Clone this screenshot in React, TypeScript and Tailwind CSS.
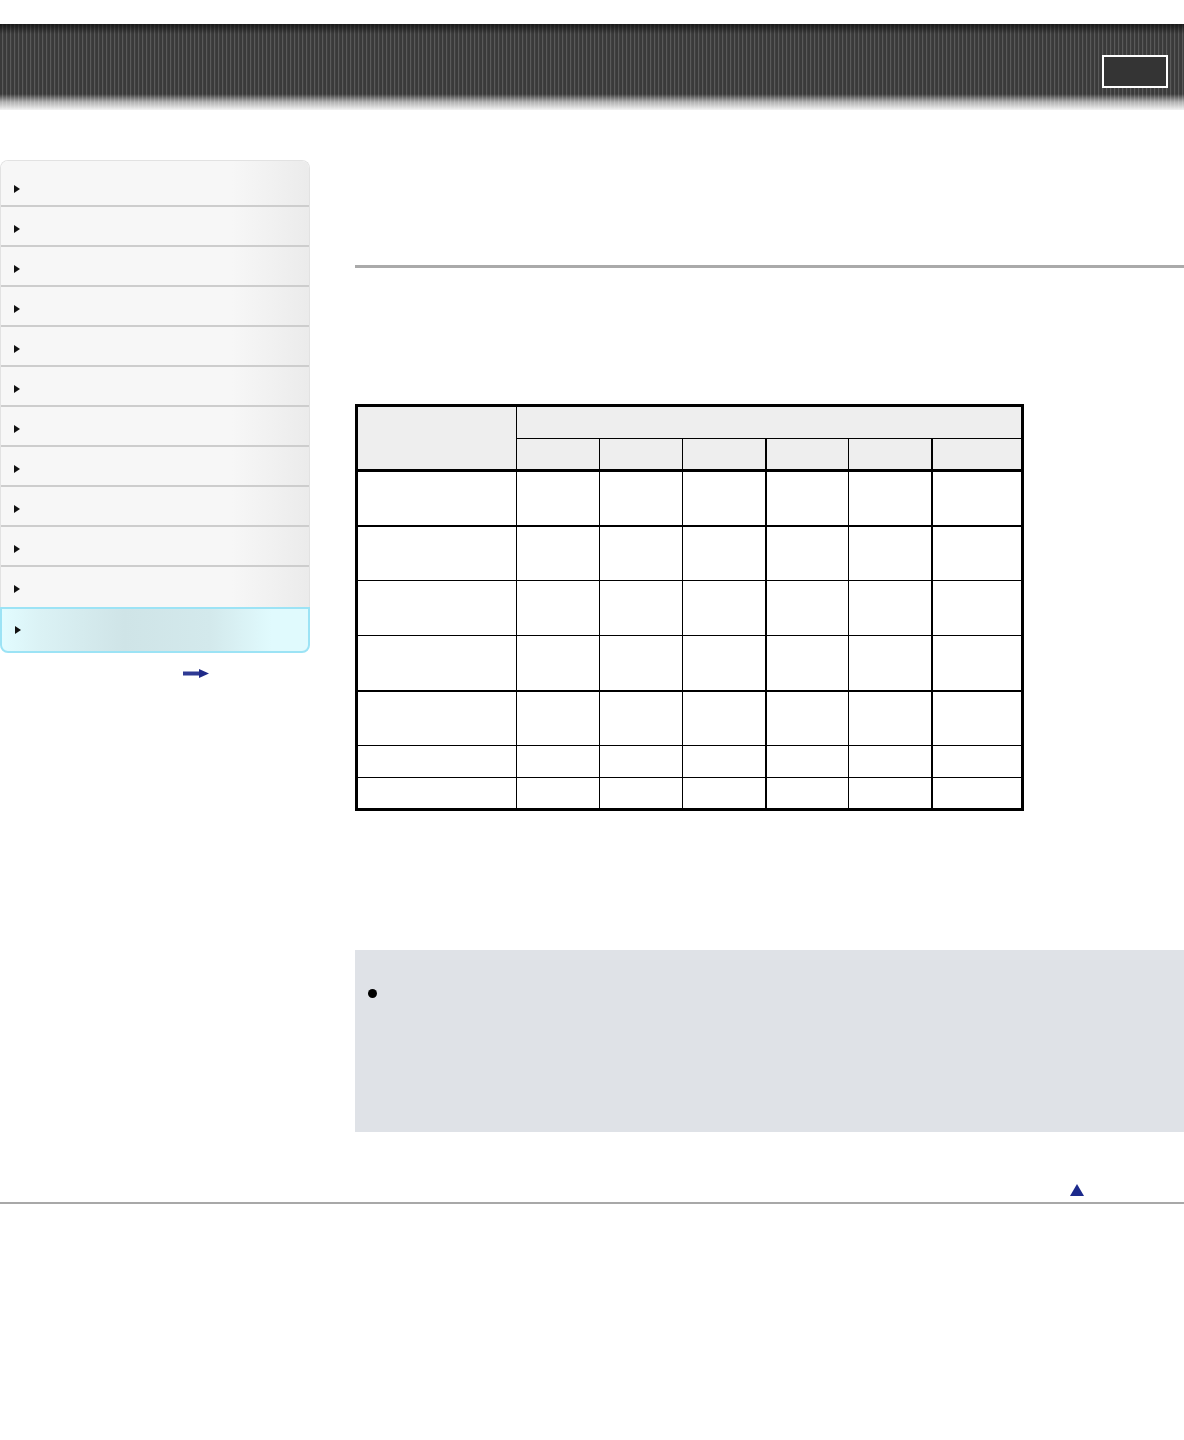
import React from 'react';

const navRows = Array.from({ length: 10 });

function Bullet() {
  return (
    <svg width="6" height="8" viewBox="0 0 6 8" className="shrink-0">
      <path d="M0 0 L6 4 L0 8 Z" fill="#111" />
    </svg>
  );
}

function Header() {
  return (
    <div className="relative h-[86px] bg-[repeating-linear-gradient(90deg,#3a3a3a_0px,#3a3a3a_2px,#5a5a5a_2px,#5a5a5a_3px,#404040_3px,#404040_4px)]">
      <div className="absolute inset-0 bg-[linear-gradient(180deg,rgba(10,10,10,0.7)_0px,rgba(10,10,10,0)_10px,rgba(255,255,255,0)_70px,rgba(255,255,255,0.6)_78px,#f2f2f2_86px)] pointer-events-none" />
      <div className="absolute right-[16px] top-[31px] w-[66px] h-[33px] border-2 border-white bg-[#343434]" />
    </div>
  );
}

function Sidebar() {
  return (
    <div className="w-[310px] shrink-0 mt-[50px]">
      <div className="rounded-t-[8px] border border-b-0 border-[#e2e2e2] overflow-hidden">
        <div className="h-[46px] pt-[24px] pl-[13px] flex items-start bg-[linear-gradient(90deg,#f7f7f7_75%,#ebebeb)] border-b-2 border-[#cdcdcd]">
          <Bullet />
        </div>
        {navRows.map((_, i) => (
          <div
            key={i}
            className="h-[40px] pt-[18px] pl-[13px] flex items-start bg-[linear-gradient(90deg,#f7f7f7_75%,#ebebeb)] border-b-2 border-[#cdcdcd] last:border-b-0"
          >
            <Bullet />
          </div>
        ))}
      </div>
      <div className="h-[46px] pl-[13px] flex items-center rounded-b-[8px] border-2 border-[#9ce3f5] bg-[linear-gradient(90deg,#e2fcff_0%,#dbf2f5_12%,#cfe4e7_40%,#d3e9ec_68%,#e0fafd_88%)]">
        <Bullet />
      </div>
      <div className="flex justify-start pl-[183px] mt-[16px]">
        <svg width="26" height="9" viewBox="0 0 26 9">
          <rect x="0" y="2.5" width="18" height="4" fill="#2e3a94" />
          <path d="M16 0 L26 4.5 L16 9 Z" fill="#1f2a88" />
        </svg>
      </div>
    </div>
  );
}

const thin = 'border border-black';

function DataTable() {
  const body = [
    { h: 'h-[55px]', bottom: 'border-b-2' },
    { h: 'h-[55px]', bottom: '' },
    { h: 'h-[55px]', bottom: '' },
    { h: 'h-[55px]', bottom: 'border-b-2' },
    { h: 'h-[55px]', bottom: '' },
    { h: 'h-[32px]', bottom: '' },
    { h: 'h-[32px]', bottom: '' },
  ];
  const colW = ['w-[83px]', 'w-[83px]', 'w-[83px]', 'w-[83px]', 'w-[83px]', 'w-[91px]'];
  const colL = ['', '', '', 'border-l-2', '', 'border-l-2'];
  return (
    <table className="table-fixed border-collapse border-[3px] border-black w-[666px] mt-[136px]">
      <colgroup>
        <col className="w-[160px]" />
        {colW.map((w, i) => (
          <col key={i} className={w} />
        ))}
      </colgroup>
      <thead>
        <tr className="h-[33px] bg-[#eeeeee]">
          <th rowSpan={2} className={`${thin} border-b-[3px]`} />
          <th colSpan={6} className={thin} />
        </tr>
        <tr className="h-[32px] bg-[#eeeeee]">
          {colL.map((l, i) => (
            <th key={i} className={`${thin} ${l} border-b-[3px]`} />
          ))}
        </tr>
      </thead>
      <tbody>
        {body.map((r, ri) => (
          <tr key={ri} className={r.h}>
            <td className={`${thin} ${r.bottom}`} />
            {colL.map((l, i) => (
              <td key={i} className={`${thin} ${l} ${r.bottom}`} />
            ))}
          </tr>
        ))}
      </tbody>
    </table>
  );
}

export default function App() {
  return (
    <div className="min-h-[1440px] bg-white pt-[24px] font-['Liberation_Sans',Arial,sans-serif]">
      <Header />
      <div className="flex items-start">
        <Sidebar />
        <div className="flex-1 ml-[45px]">
          <div className="mt-[155px] h-[3px] bg-[#aaaaaa]" />
          <DataTable />
          <div className="mt-[139px] h-[182px] bg-[#dfe2e7] pl-[13px] pt-[39px]">
            <div className="w-[9px] h-[9px] rounded-full bg-black" />
          </div>
        </div>
      </div>
      <div className="flex justify-end pr-[100px] mt-[52px] mb-[6px]">
        <svg width="14" height="12" viewBox="0 0 14 12">
          <path d="M7 0 L14 12 L0 12 Z" fill="#1c2a8c" />
        </svg>
      </div>
      <div className="border-t-2 border-[#a8a8a8]" />
    </div>
  );
}
